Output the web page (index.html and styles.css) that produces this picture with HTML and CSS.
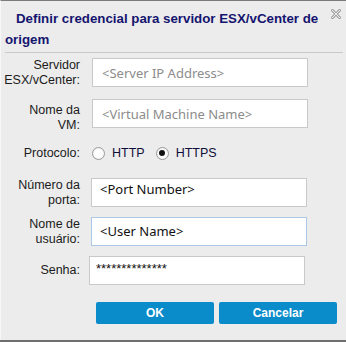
FILE: index.html
```html
<!DOCTYPE html>
<html lang="pt">
	<head>
		<meta charset="UTF-8">
		<title>Definir credencial</title>
		<link rel="stylesheet" href="styles.css">
	</head>
	<body>
		<div class="dialog">

			<div class="header">
				<h1 class="title">Definir credencial para servidor ESX/vCenter de origem</h1>
				<span class="close">
					<svg width="10" height="10" viewBox="0 0 10 10">
						<path d="M1 1 L9 9 M9 1 L1 9" stroke="#a3a3a3" stroke-width="3" stroke-linecap="square"/>
						<path d="M1 1 L9 9 M9 1 L1 9" stroke="#efefef" stroke-width="1" stroke-linecap="square"/>
					</svg>
				</span>
			</div>

			<div class="form">
				<div class="row">
					<label class="label">Servidor<br>ESX/vCenter:</label>
					<input class="field" type="text" placeholder="<Server IP Address>">
				</div>
				<div class="row row-vm">
					<label class="label label-low">Nome da<br>VM:</label>
					<input class="field" type="text" placeholder="<Virtual Machine Name>">
				</div>
				<div class="row row-proto">
					<label class="label">Protocolo:</label>
					<span class="radio"></span>
					<span class="radio-text">HTTP</span>
					<span class="radio checked"></span>
					<span class="radio-text">HTTPS</span>
				</div>
				<div class="row row-port">
					<label class="label">Número da<br>porta:</label>
					<input class="field field-port" type="text" value="<Port Number>">
				</div>
				<div class="row row-user">
					<label class="label">Nome de<br>usuário:</label>
					<input class="field field-user" type="text" value="<User Name>">
				</div>
				<div class="row row-pass">
					<label class="label">Senha:</label>
					<input class="field field-pass" type="text" value="**************">
				</div>
				<div class="buttons">
					<button class="btn">OK</button>
					<button class="btn">Cancelar</button>
				</div>
			</div>

		</div>
		<div class="bottom"></div>
	</body>
</html>
```

FILE: styles.css
```css
*{
	margin: 0;
	padding: 0;
	box-sizing: border-box;
}
body{
	width: 346px;
	height: 342px;
	overflow: hidden;
	background-color: #ececec;
	font-family: "Liberation Sans", Arial, sans-serif;
}
.dialog{
	height: 340px;
	border-top: 1px solid #7b7b7b;
	border-left: 1px solid #f7f7f7;
}

.header{
	display: flex;
	margin: 0 3px 0 4px;
	padding: 7px 0 2px;
	border-bottom: 1px solid #c9c9c9;
}
.title{
	flex: 1;
	padding-right: 12px;
	text-indent: 11px;
	font-size: 13.3px;
	line-height: 21px;
	font-weight: bold;
	color: #15156f;
}
.close{
	width: 10px;
	height: 10px;
	margin-top: 1px;
	margin-right: 2px;
}
.close svg{
	display: block;
}

.form{
	padding-top: 5px;
}
.row{
	display: flex;
	align-items: center;
	height: 29px;
}
.row-vm{
	margin-top: 12px;
}
.row-proto{
	height: 24px;
	margin-top: 13px;
}
.row-port{
	margin-top: 13px;
}
.row-user,
.row-pass{
	margin-top: 10px;
}
.label{
	width: 79px;
	flex-shrink: 0;
	text-align: right;
	font-size: 12.5px;
	line-height: 15px;
	color: #1b1b1b;
	white-space: nowrap;
}
.label-low{
	padding-top: 8px;
}
.field{
	width: 216px;
	height: 29px;
	margin-left: 12px;
	padding: 0 9px;
	font-family: "Noto Sans", "Open Sans", sans-serif;
	font-size: 13px;
	color: #111;
	background-color: #fff;
	border: 1px solid #c9c9c9;
	outline: none;
}
.field::placeholder{
	color: #8c8c8c;
}
.field-port{
	margin-left: 11px;
	padding: 0 8px 8px;
}
.field-user{
	margin-left: 11px;
	padding: 0 8px 2px;
	border-color: #abc9e6;
}
.field-pass{
	margin-left: 9px;
	padding: 0 6px 4px;
	font-family: "Liberation Sans", Arial, sans-serif;
	font-size: 13px;
}

.radio{
	width: 13px;
	height: 13px;
	margin-left: 12px;
	border: 1px solid #9a9a9a;
	border-radius: 50%;
	background: radial-gradient(circle at 50% 50%, #fff 0, #fff 45%, #e4e4e4 100%);
	display: flex;
	align-items: center;
	justify-content: center;
}
.radio-text + .radio{
	margin-left: 11px;
}
.radio.checked::after{
	content: "";
	width: 6px;
	height: 6px;
	border-radius: 50%;
	background-color: #111;
}
.radio-text{
	margin-left: 7px;
	font-size: 12.5px;
	color: #0f0f3a;
}

.buttons{
	display: flex;
	gap: 5px;
	margin: 17px 0 0 95px;
}
.btn{
	width: 118px;
	height: 22px;
	font-family: "Liberation Sans", Arial, sans-serif;
	font-size: 12px;
	font-weight: bold;
	color: #fff;
	background-color: #0a8bca;
	border: 0;
	border-radius: 2px;
}

.bottom{
	height: 2px;
	background-color: #6e6e6e;
}
```
